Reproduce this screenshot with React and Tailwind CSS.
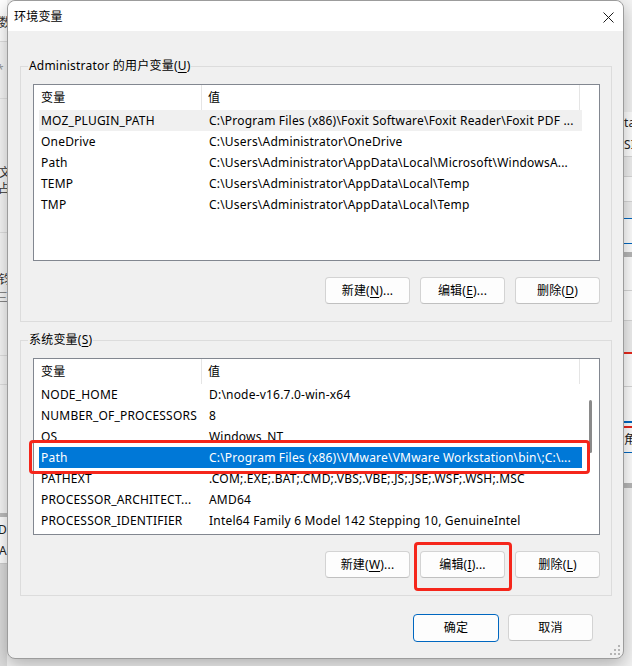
import React from "react";

const userRows = [
  ["MOZ_PLUGIN_PATH", "C:\\Program Files (x86)\\Foxit Software\\Foxit Reader\\Foxit PDF ..."],
  ["OneDrive", "C:\\Users\\Administrator\\OneDrive"],
  ["Path", "C:\\Users\\Administrator\\AppData\\Local\\Microsoft\\WindowsA..."],
  ["TEMP", "C:\\Users\\Administrator\\AppData\\Local\\Temp"],
  ["TMP", "C:\\Users\\Administrator\\AppData\\Local\\Temp"],
];

const sysRows = [
  ["NODE_HOME", "D:\\node-v16.7.0-win-x64"],
  ["NUMBER_OF_PROCESSORS", "8"],
  ["OS", "Windows_NT"],
  ["Path", "C:\\Program Files (x86)\\VMware\\VMware Workstation\\bin\\;C:\\..."],
  ["PATHEXT", ".COM;.EXE;.BAT;.CMD;.VBS;.VBE;.JS;.JSE;.WSF;.WSH;.MSC"],
  ["PROCESSOR_ARCHITECT...", "AMD64"],
  ["PROCESSOR_IDENTIFIER", "Intel64 Family 6 Model 142 Stepping 10, GenuineIntel"],
];

function U({ children }) {
  return <span className="underline underline-offset-[2px] decoration-[1px]">{children}</span>;
}

function Btn({ children, primary = false }) {
  return (
    <div
      className={
        primary
          ? "h-[28px] w-[86px] flex items-center justify-center rounded-[4px] border border-[#0067c0] bg-[#fdfdfd] text-[12px]"
          : "h-[27px] w-[85px] flex items-center justify-center rounded-[4px] border border-[#d3d3d3] border-b-[#c0c0c0] bg-[#fdfdfd] text-[12px]"
      }
    >
      {children}
    </div>
  );
}

function VarList({ rows, mode }) {
  return (
    <div className="mt-[10px] h-[177px] border border-[#828790] bg-white flex">
      <div className="w-[548px] flex flex-col">
        <div className="h-[25px] flex items-center">
          <div className="w-[168px] h-full pl-[7px] flex items-center border-r border-[#e5e5e5]">变量</div>
          <div className="w-[378px] h-full pl-[6px] flex items-center border-r border-[#e5e5e5]">值</div>
        </div>
        <div className="pl-[5px] flex flex-col">
          {rows.map(([k, v], i) => {
            const isGray = mode === "user" && i === 0;
            const isBlue = mode === "sys" && i === 3;
            return (
              <div
                key={k}
                className={
                  "relative h-[21px] w-[543px] flex items-center whitespace-nowrap " +
                  (isGray ? "bg-[#f0f0f0]" : isBlue ? "bg-[#0078d7] text-white" : "")
                }
              >
                <div className="w-[163px] pl-[2px] overflow-hidden">{k}</div>
                <div className="flex-1 pl-[7px] pr-[2px] overflow-hidden">{v}</div>
                {isBlue && (
                  <div className="absolute left-[-10px] right-[-8px] top-[-7px] bottom-[-6px] rounded-[4px] border-[3px] border-[#f5261b] pointer-events-none" />
                )}
              </div>
            );
          })}
        </div>
      </div>
      <div className="flex-1 flex justify-center">
        {mode === "sys" && <div className="mt-[41px] w-[3px] h-[53px] rounded-full bg-[#8a8a8a]" />}
      </div>
    </div>
  );
}

function GroupBox({ label, mnemonic, mt, children }) {
  return (
    <fieldset className={"mx-[12px] mr-[11px] border border-[#dcdcdc] pl-[12px] pr-[11px] pb-[17px] " + mt}>
      <legend className="ml-[-5px] px-[1px] leading-[16px] h-[16px]">
        {label}(<U>{mnemonic}</U>)
      </legend>
      {children}
    </fieldset>
  );
}

function Grip() {
  const dots = [
    [8, 0], [4, 4], [8, 4], [0, 8], [4, 8], [8, 8],
  ];
  return (
    <svg className="absolute right-[3px] bottom-[3px]" width="10" height="10" viewBox="0 0 10 10">
      {dots.map(([x, y], i) => (
        <rect key={i} x={x} y={y} width="2" height="2" fill="#b4b4b4" />
      ))}
    </svg>
  );
}

function LeftStrip() {
  return (
    <div className="w-[7px] h-full flex flex-col overflow-hidden whitespace-nowrap text-[12px] text-[#333] bg-[#f7f7f7]">
      <div className="h-[41px] bg-white flex items-center"><span className="ml-[-1px] mt-[4px]">数</span></div>
      <div className="h-[1px] bg-[#e0e0e0]" />
      <div className="h-[56px] flex items-center"><span className="ml-[-3px] text-[#999]">*</span></div>
      <div className="h-[1px] bg-[#e4e4e4]" />
      <div className="h-[66px]" />
      <div className="h-[16px] flex items-center"><span className="ml-[-1px]">文件</span></div>
      <div className="h-[16px] flex items-center"><span className="ml-[-2px]">占</span></div>
      <div className="h-[35px]" />
      <div className="h-[1px] bg-[#e0e0e0]" />
      <div className="h-[56px] flex items-end"><span className="ml-[-1px]">钧</span></div>
      <div className="h-[18px] flex items-center"><span className="ml-[-4px] text-[#888]">三</span></div>
      <div className="h-[48px]" />
      <div className="h-[1px] bg-[#e0e0e0]" />
      <div className="h-[28px]" />
      <div className="h-[1px] bg-[#e0e0e0]" />
      <div className="h-[128px]" />
      <div className="h-[4px] bg-[#bdbdbd]" />
      <div className="h-[22px] bg-white flex items-end"><span className="ml-[-2px] text-[#222]">DE</span></div>
      <div className="h-[24px] bg-white flex items-center"><span className="ml-[-1px] text-[#222]">AN</span></div>
      <div className="h-[1px] bg-[#d0d0d0]" />
      <div className="flex-1 bg-[#dcdcdc]" />
    </div>
  );
}

function RightStrip() {
  return (
    <div className="w-[8px] h-full flex flex-col overflow-hidden whitespace-nowrap text-[12px] text-[#222] bg-[#f3f3f3]">
      <div className="h-[112px]" />
      <div className="h-[22px] bg-white flex items-center"><span>ta</span></div>
      <div className="h-[22px] bg-white flex items-center"><span>SI</span></div>
      <div className="h-[1px] bg-[#d8d8d8]" />
      <div className="h-[19px] bg-[#f0f0f0]" />
      <div className="h-[1px] bg-[#d8d8d8]" />
      <div className="h-[24px] bg-white" />
      <div className="h-[1px] bg-[#d8d8d8]" />
      <div className="h-[16px] bg-[#f0f0f0]" />
      <div className="h-[1px] bg-[#0067c0]" />
      <div className="h-[24px] bg-white" />
      <div className="h-[1px] bg-[#0067c0]" />
      <div className="h-[8px] bg-white" />
      <div className="h-[5px] bg-[#b8b8b8]" />
      <div className="h-[33px] bg-white" />
      <div className="h-[1px] bg-[#d8d8d8]" />
      <div className="h-[29px] bg-white" />
      <div className="h-[1px] bg-[#d8d8d8]" />
      <div className="h-[31px] bg-[#f0f0f0]" />
      <div className="h-[2px] bg-[#e8281c]" />
      <div className="h-[32px] bg-white" />
      <div className="h-[1px] bg-[#d8d8d8]" />
      <div className="h-[34px] bg-white" />
      <div className="h-[2px] bg-[#0067c0]" />
      <div className="h-[3px] bg-white" />
      <div className="h-[2px] bg-[#e8281c]" />
      <div className="h-[24px] bg-white flex items-center"><span>角</span></div>
      <div className="h-[1px] bg-[#0067c0]" />
      <div className="h-[30px] bg-white" />
      <div className="h-[5px] bg-[#b8b8b8]" />
      <div className="flex-1 bg-[#f3f3f3]" />
    </div>
  );
}

export default function App() {
  return (
    <div className="relative w-[632px] h-[666px] overflow-hidden bg-[#f3f3f3] text-[12px] tracking-[0.2px] text-black font-['Noto_Sans','Noto_Sans_CJK_SC',sans-serif]">
      <div className="flex w-full h-full">
        <LeftStrip />
        <div className="flex-1" />
        <RightStrip />
      </div>

      <div className="absolute left-[7px] top-0 w-[617px] rounded-[8px] border border-[#9c9c9c] bg-[#f0f0f0] shadow-[0_6px_18px_rgba(0,0,0,0.28)] flex flex-col">
        <div className="h-[30px] rounded-t-[8px] bg-white flex items-center justify-between pl-[6px] pr-[9px]">
          <span className="mt-[1px]">环境变量</span>
          <svg width="11" height="11" viewBox="0 0 11 11" className="mt-[2px]">
            <path d="M0.5 0.5 L10.5 10.5 M10.5 0.5 L0.5 10.5" stroke="#1b1b1b" strokeWidth="1" />
          </svg>
        </div>

        <div className="pt-[27px] pb-[16px] flex flex-col">
          <GroupBox label="Administrator 的用户变量" mnemonic="U" mt="">
            <VarList rows={userRows} mode="user" />
            <div className="mt-[16px] flex justify-end gap-[10px]">
              <Btn>新建(<U>N</U>)...</Btn>
              <Btn>编辑(<U>E</U>)...</Btn>
              <Btn>删除(<U>D</U>)</Btn>
            </div>
          </GroupBox>

          <GroupBox label="系统变量" mnemonic="S" mt="mt-[10px]">
            <VarList rows={sysRows} mode="sys" />
            <div className="mt-[16px] flex justify-end gap-[10px]">
              <Btn>新建(<U>W</U>)...</Btn>
              <div className="relative">
                <Btn>编辑(<U>I</U>)...</Btn>
                <div className="absolute left-[-6px] right-[-7px] top-[-9px] bottom-[-13px] rounded-[4px] border-[3px] border-[#f5261b]" />
              </div>
              <Btn>删除(<U>L</U>)</Btn>
            </div>
          </GroupBox>

          <div className="mt-[18px] pr-[30px] flex justify-end gap-[9px]">
            <Btn primary>确定</Btn>
            <Btn>取消</Btn>
          </div>
        </div>
        <Grip />
      </div>
    </div>
  );
}
